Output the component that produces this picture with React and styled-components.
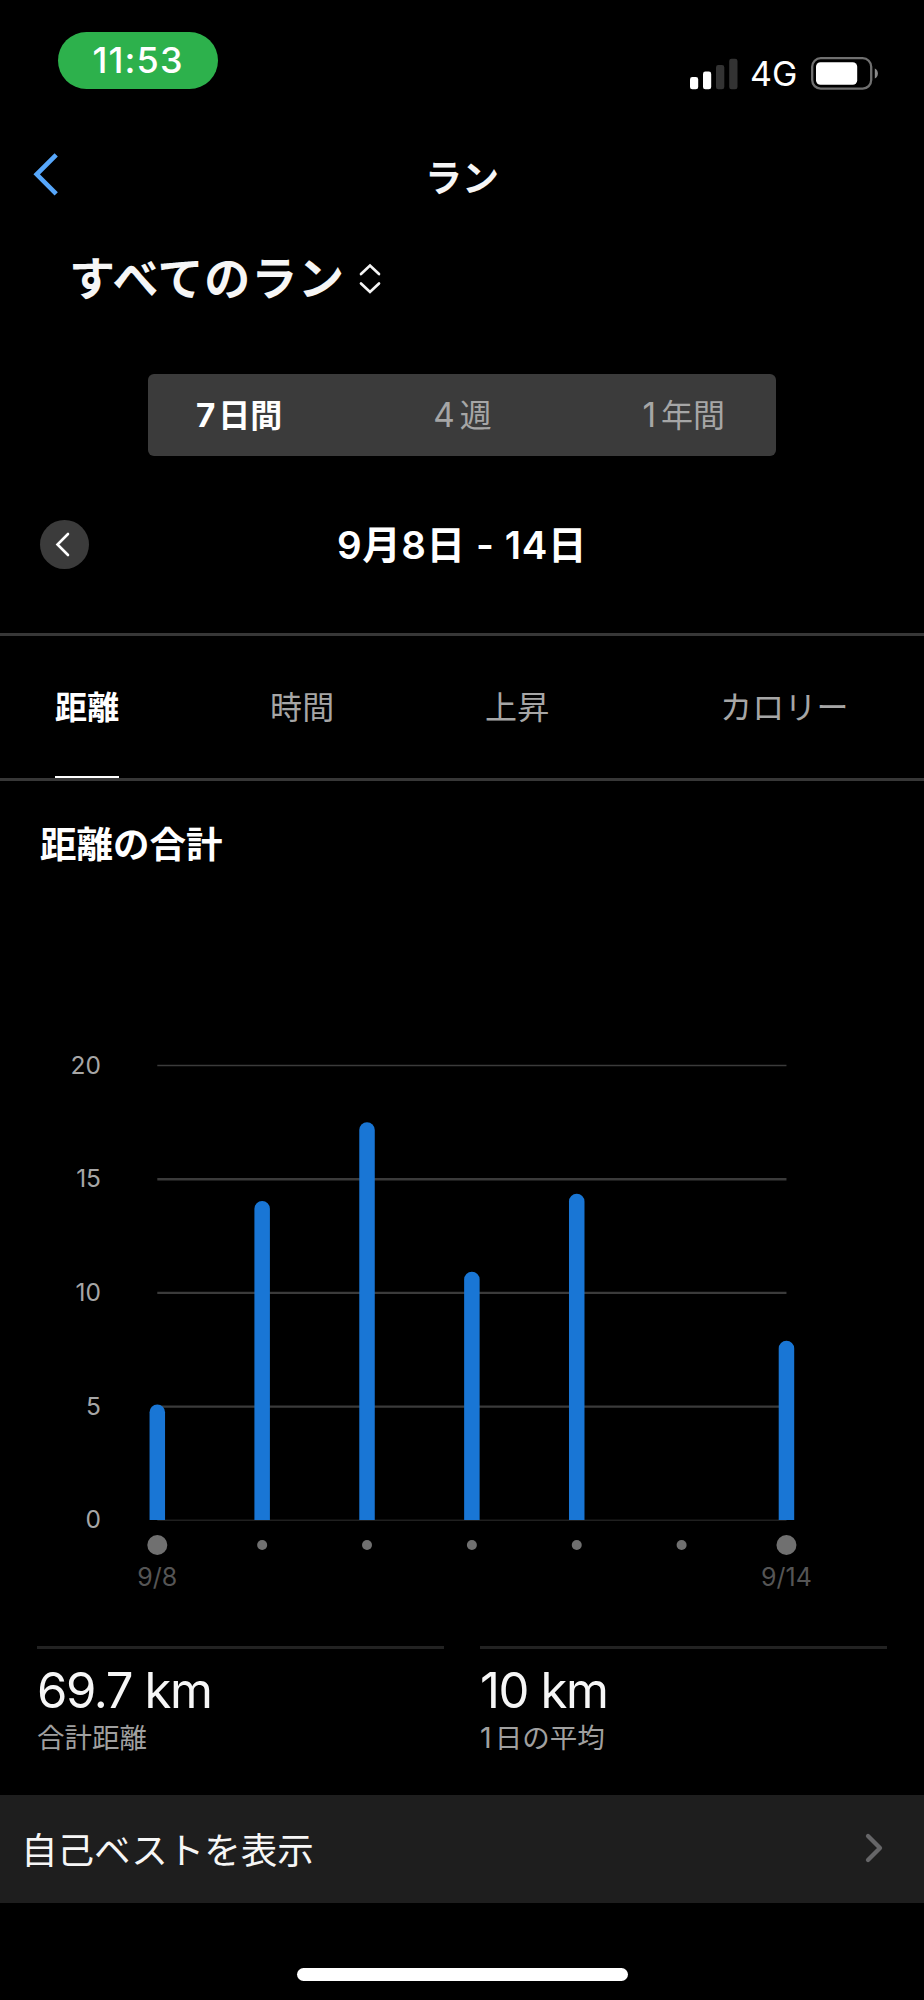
import { useState } from 'react';
import styled, { createGlobalStyle } from 'styled-components';

const periods = [
  { count: '7', unit: '日間' },
  { count: '4', unit: '週' },
  { count: '1', unit: '年間' },
];
const metrics = ['距離', '時間', '上昇', 'カロリー'];

const days = [
  { label: '9/8', km: 5.08 },
  { label: '', km: 14.03 },
  { label: '', km: 17.49 },
  { label: '', km: 10.92 },
  { label: '', km: 14.35 },
  { label: '', km: 0 },
  { label: '9/14', km: 7.88 },
];

const stats = [
  { value: '69.7 km', count: '', label: '合計距離' },
  { value: '10 km', count: '1', label: '日の平均' },
];

// Chart geometry
const CHART_LEFT = 157.3;
const CHART_STEP = 104.86;
const CHART_BASE = 500;
const KM_HEIGHT = 22.74;
const BAR_WIDTH = 15.5;

const barPath = (x, km) => {
  const r = BAR_WIDTH / 2;
  const top = CHART_BASE - km * KM_HEIGHT;
  return `M${x - r} ${CHART_BASE}V${top + r}a${r} ${r} 0 0 1 ${BAR_WIDTH} 0V${CHART_BASE}Z`;
};

const DistanceChart = () => (
  <Chart viewBox="0 0 924 600" role="img" aria-label="距離の合計">
    {[20, 15, 10, 5, 0].map((km) => {
      const y = CHART_BASE - km * KM_HEIGHT;
      return (
        <g key={km}>
          <AxisLabel x="101" y={y + 8.3} textAnchor="end">{km}</AxisLabel>
          <line
            x1={CHART_LEFT}
            x2={CHART_LEFT + CHART_STEP * 6}
            y1={y + 0.3}
            y2={y + 0.3}
            stroke={km === 0 ? '#1f1f1f' : '#3b3b3b'}
            strokeWidth={km === 20 || km === 0 ? 1.5 : 2.4}
          />
        </g>
      );
    })}
    {days.map((day, i) => {
      const x = CHART_LEFT + CHART_STEP * i;
      return (
        <g key={i}>
          {day.km > 0 && <path d={barPath(x, day.km)} fill="#1976d5" />}
          <circle cx={x} cy="525" r={day.label ? 10 : 5} fill="#707070" />
          {day.label && (
            <DayLabel x={x} y="565.5" textAnchor="middle">{day.label}</DayLabel>
          )}
        </g>
      );
    })}
  </Chart>
);

const App = () => {
  const [period, setPeriod] = useState(0);
  const [metric, setMetric] = useState(0);

  return (
    <Screen>
      <GlobalStyle />

      <StatusBar>
        <TimePill>11:53</TimePill>
        <StatusIcons>
          <svg width="48" height="32" viewBox="0 0 48 32">
            <rect x="0" y="19" width="8.2" height="12.3" rx="2.4" fill="#fff" />
            <rect x="13" y="13.5" width="8.2" height="17.8" rx="2.4" fill="#fff" />
            <rect x="26" y="7" width="8.3" height="24.3" rx="2.4" fill="#333" />
            <rect x="39.2" y="0.7" width="8.3" height="30.6" rx="2.4" fill="#333" />
          </svg>
          <Network>4G</Network>
          <svg width="68" height="34" viewBox="0 0 68 34">
            <rect x="1.2" y="1.2" width="59" height="30.4" rx="8.5" fill="none" stroke="#707070" strokeWidth="2.3" />
            <rect x="5" y="5.3" width="41.2" height="22.4" rx="4.5" fill="#fff" />
            <path d="M63.8 11.4c2 .9 3.1 2.8 3.1 5.1s-1.1 4.2-3.1 5.1Z" fill="#8a8a8a" />
          </svg>
        </StatusIcons>
      </StatusBar>

      <NavBar>
        <BackButton aria-label="戻る">
          <svg width="26" height="44" viewBox="0 0 26 44">
            <path d="M24.2 2.8 4.7 22.3l19.500 19.500" fill="none" stroke="#57a7fb" strokeWidth="4.6" />
          </svg>
        </BackButton>
        <NavTitle>ラン</NavTitle>
      </NavBar>

      <ActivityPicker>
        すべてのラン
        <svg width="22" height="32" viewBox="0 0 22 32">
          <path
            d="M2 11 11 2.5l9 8.5M2 20.5l9 8.5 9-8.5"
            fill="none"
            stroke="#f4f4f4"
            strokeWidth="2.7"
            strokeLinecap="round"
          />
        </svg>
      </ActivityPicker>

      <Segments>
        {periods.map(({ count, unit }, i) => (
          <Segment key={unit} $active={i === period} onClick={() => setPeriod(i)}>
            <Count $gap={i === 0 ? 3 : 5}>{count}</Count>
            {unit}
          </Segment>
        ))}
      </Segments>

      <DateRow>
        <PrevButton aria-label="前の週">
          <svg width="16" height="25" viewBox="0 0 16 25">
            <path
              d="M13 2 2.5 12.5 13 23"
              fill="none"
              stroke="#fff"
              strokeWidth="2.6"
              strokeLinecap="round"
            />
          </svg>
        </PrevButton>
        <DateRange>9月8日 - 14日</DateRange>
      </DateRow>

      <Tabs>
        {metrics.map((name, i) => (
          <Tab key={name} $active={i === metric} onClick={() => setMetric(i)}>
            {name}
          </Tab>
        ))}
      </Tabs>

      <ChartTitle>距離の合計</ChartTitle>
      <DistanceChart />

      <Stats>
        {stats.map((stat) => (
          <Stat key={stat.label}>
            <StatValue>{stat.value}</StatValue>
            <StatLabel>
              {stat.count && <Count $gap={3}>{stat.count}</Count>}
              {stat.label}
            </StatLabel>
          </Stat>
        ))}
      </Stats>

      <BestRow>
        自己ベストを表示
        <svg width="22" height="32" viewBox="0 0 22 32">
          <path
            d="m4 4 12 12L4 28"
            fill="none"
            stroke="#666668"
            strokeWidth="4.3"
            strokeLinecap="round"
            strokeLinejoin="round"
          />
        </svg>
      </BestRow>

      <HomeIndicator />
    </Screen>
  );
};

// Styles
const GlobalStyle = createGlobalStyle`
  body {
    margin: 0;
    background: #000;
  }

  button {
    padding: 0;
    border: 0;
    background: none;
    color: inherit;
    font: inherit;
  }

  svg {
    display: block;
    flex-shrink: 0;
  }
`;

const Screen = styled.main`
  display: flex;
  flex-direction: column;
  width: 924px;
  height: 2000px;
  overflow: hidden;
  background: #000;
  color: #f6f6f6;
  font-family: Inter, 'Noto Sans CJK JP', sans-serif;
`;

const StatusBar = styled.header`
  display: flex;
  justify-content: space-between;
  align-items: flex-start;
  height: 120px;
  padding: 32px 45px 0 58px;
  box-sizing: border-box;
`;

const TimePill = styled.div`
  width: 160px;
  height: 57px;
  border-radius: 29px;
  background: #2db14c;
  color: #fff;
  font-size: 36px;
  font-weight: 500;
  letter-spacing: 1.1px;
  line-height: 57px;
  text-align: center;
`;

const StatusIcons = styled.div`
  display: flex;
  align-items: center;
  padding-top: 24px;
`;

const Network = styled.span`
  width: 48px;
  margin: 0 13px 0 12px;
  padding-top: 1px;
  color: #fff;
  font-size: 34px;
  line-height: 34px;
  white-space: nowrap;
`;

const NavBar = styled.nav`
  display: grid;
  grid-template-columns: 1fr auto 1fr;
  align-items: center;
  height: 108px;
  padding: 0 32px;
`;

const BackButton = styled.button`
  justify-self: start;
`;

const NavTitle = styled.h1`
  margin: 0;
  padding-top: 9px;
  font-size: 37px;
  font-weight: 700;
  line-height: 54px;
`;

const ActivityPicker = styled.button`
  display: flex;
  align-items: center;
  align-self: flex-start;
  gap: 14px;
  height: 100px;
  margin-left: 69px;
  font-size: 46px;
  font-weight: 700;
  letter-spacing: 0.8px;
  line-height: 62px;

  svg {
    margin-top: 1px;
  }
`;

const Segments = styled.div`
  display: flex;
  justify-content: space-between;
  align-items: center;
  width: 628px;
  height: 82px;
  margin: 46px auto 0;
  padding: 0 51px 4px 48px;
  border-radius: 6px;
  background: #3b3b3b;
  box-sizing: border-box;
`;

const Segment = styled.button`
  color: ${({ $active }) => ($active ? '#fff' : '#a6a6a6')};
  font-size: 32px;
  font-weight: ${({ $active }) => ($active ? 700 : 400)};
`;

const Count = styled.span`
  margin-right: ${({ $gap }) => $gap}px;
  font-size: 1.04em;
`;

const DateRow = styled.div`
  display: grid;
  grid-template-columns: 1fr auto 1fr;
  align-items: center;
  height: 177px;
  padding: 0 40px;
`;

const PrevButton = styled.button`
  display: flex;
  justify-content: center;
  align-items: center;
  width: 49px;
  height: 49px;
  padding-right: 3px;
  border-radius: 50%;
  background: #3b3b3b;
  box-sizing: border-box;
`;

const DateRange = styled.h2`
  margin: 0;
  padding-bottom: 5px;
  color: #fff;
  font-size: 38.5px;
  font-weight: 600;
  letter-spacing: 0.6px;
`;

const Tabs = styled.div`
  display: grid;
  grid-template-columns: 215px 215px 235px auto;
  justify-content: start;
  height: 148px;
  padding-left: 55px;
  border-top: 3px solid #373737;
  border-bottom: 3px solid #373737;
  box-sizing: border-box;
`;

const Tab = styled.button`
  justify-self: start;
  padding-bottom: 2px;
  border-bottom: 2px solid ${({ $active }) => ($active ? '#fff' : 'transparent')};
  color: ${({ $active }) => ($active ? '#fff' : '#a6a6a6')};
  font-size: 32px;
  font-weight: ${({ $active }) => ($active ? 700 : 400)};
  letter-spacing: 0.2px;
`;

const ChartTitle = styled.h3`
  margin: 0;
  padding: 37px 40px 0;
  height: 239px;
  box-sizing: border-box;
  color: #fff;
  font-size: 36.5px;
  font-weight: 700;
  line-height: 54px;
`;

const Chart = styled.svg`
  width: 924px;
  height: 600px;
`;

const AxisLabel = styled.text`
  fill: #a6a6a6;
  font-size: 24.5px;
`;

const DayLabel = styled.text`
  fill: #555;
  font-size: 25px;
`;

const Stats = styled.section`
  display: grid;
  grid-template-columns: 1fr 1fr;
  gap: 36px;
  height: 149px;
  margin: 26px 37px 0;
`;

const Stat = styled.div`
  border-top: 3px solid #222;
`;

const StatValue = styled.div`
  padding-top: 12px;
  font-size: 49px;
  letter-spacing: -1.4px;
  line-height: 60px;
`;

const StatLabel = styled.div`
  color: #a0a0a0;
  font-size: 27.5px;
  line-height: 34px;
`;

const BestRow = styled.button`
  display: flex;
  justify-content: space-between;
  align-items: center;
  height: 108px;
  padding: 0 38px 2px 21px;
  background: #1e1e1e;
  color: #f6f6f6;
  font-size: 36.5px;
`;

const HomeIndicator = styled.div`
  width: 331px;
  height: 12.5px;
  margin: 65px auto 0;
  border-radius: 7px;
  background: #fff;
`;

export default App;
